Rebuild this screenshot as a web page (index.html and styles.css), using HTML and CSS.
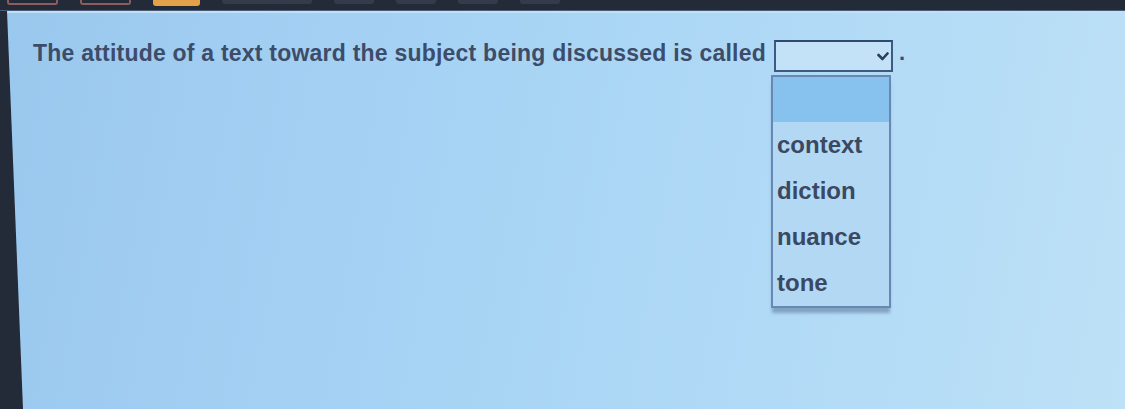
FILE: index.html
```html
<!DOCTYPE html>
<html lang="en">
<head>
  <meta charset="UTF-8" />
  <meta name="viewport" content="width=device-width, initial-scale=1.0"/>
  <title>Question 4</title>
  <link rel="stylesheet" href="styles.css">
</head>
<body>
  <div class="screen">
    <div class="tabbar">
      <span class="tab tab-outline"></span>
      <span class="tab tab-outline"></span>
      <span class="tab tab-active"></span>
      <span class="tab tab-faint wide"></span>
      <span class="tab tab-faint"></span>
      <span class="tab tab-faint"></span>
      <span class="tab tab-faint"></span>
      <span class="tab tab-faint"></span>
    </div>
    <main class="panel">
      <div class="question">
        <span class="stem">The attitude of a text toward the subject being discussed is called</span>
        <div class="dropdown">
          <div class="select-box">
            <svg viewBox="0 0 12 9" class="chevron">
              <path d="M1.5 3 L5.5 7 L10.5 1.5" />
            </svg>
          </div>
          <ul class="options">
            <li class="selected"></li>
            <li>context</li>
            <li>diction</li>
            <li>nuance</li>
            <li>tone</li>
          </ul>
        </div>
        <span class="stop">.</span>
      </div>
    </main>
  </div>
</body>
</html>
```

FILE: styles.css
```css
body {
  margin: 0;
  background-color: #232a38;
  font-family: 'Liberation Sans', Arial, sans-serif;
  overflow: hidden;
}
.screen {
  display: flex;
  flex-direction: column;
  height: 409px;
}

/* browser tabs along the top */
.tabbar {
  height: 10px;
  display: flex;
  align-items: flex-start;
  gap: 22px;
  padding-left: 7px;
  background-color: #242b38;
  border-bottom: 1px solid #4a5c78;
}
.tab {
  width: 47px;
  height: 5px;
  border-radius: 0 0 3px 3px;
}
.tab-outline {
  border: 2px solid #8c5d5c;
  border-top: none;
  height: 3px;
}
.tab-active {
  background-color: #e3a24a;
  height: 6px;
}
.tab-faint {
  background-color: #343c4b;
  width: 40px;
  height: 4px;
}
.tab-faint.wide {
  width: 90px;
}

/* question area */
.panel {
  flex: 1;
  background: linear-gradient(100deg, #9ac7ed 0%, #a5d2f4 35%, #afd9f6 65%, #bde1f6 100%);
  border-top: 2px solid #bfe0f6;
  clip-path: polygon(7px 0, 100% 0, 100% 100%, 23px 100%);
  padding: 27px 0 0 33px;
}
.question {
  display: flex;
  align-items: center;
  gap: 8px;
  height: 32px;
  color: #3d4c69;
  font-weight: bold;
}
.stem {
  font-size: 23px;
  letter-spacing: 0.22px;
  padding-bottom: 5px;
}
.stop {
  font-size: 22px;
  padding-bottom: 6px;
  margin-left: -2px;
}

.dropdown {
  position: relative;
}
.select-box {
  width: 113px;
  height: 28px;
  border: 2px solid #3e5a83;
  border-top-color: #324a70;
  background-color: #c3e2f8;
  display: flex;
  align-items: center;
  justify-content: flex-end;
  padding-right: 2px;
}
.chevron {
  width: 12px;
  height: 9px;
  stroke: #2d3d5c;
  stroke-width: 2.6;
  stroke-linecap: round;
  stroke-linejoin: round;
  fill: none;
}

/* open option list */
.options {
  position: absolute;
  top: 35px;
  left: -3px;
  width: 116px;
  margin: 0;
  padding: 0;
  list-style: none;
  background-color: #b3d8f4;
  border: 2px solid #6688b2;
  box-shadow: 0 6px 3px -1px rgba(70, 95, 130, 0.45);
}
.options li {
  height: 46px;
  line-height: 46px;
  padding-left: 4px;
  font-size: 24px;
  color: #3a4862;
}
.options li.selected {
  height: 45px;
  background-color: #87c1ee;
}
```
